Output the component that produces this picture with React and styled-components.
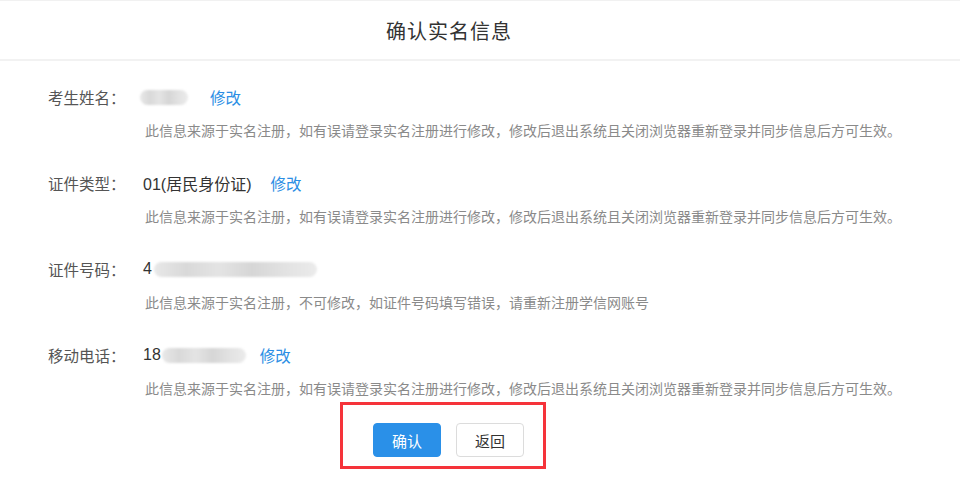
import React from "react";
import styled, { createGlobalStyle } from "styled-components";

const GlobalStyle = createGlobalStyle`
    body {
        margin: 0;
        background: #ffffff;
        font-family: "Liberation Sans", "Noto Sans CJK SC", sans-serif;
    }
`

const NOTE_EDIT = "此信息来源于实名注册，如有误请登录实名注册进行修改，修改后退出系统且关闭浏览器重新登录并同步信息后方可生效。"
const NOTE_LOCKED = "此信息来源于实名注册，不可修改，如证件号码填写错误，请重新注册学信网账号"

const rows = [
    { label: "考生姓名：", prefix: "", blur: { w: 48, shift: -3 }, editable: true, gap: 22, note: NOTE_EDIT },
    { label: "证件类型：", prefix: "01(居民身份证)", blur: null, editable: true, gap: 19, note: NOTE_EDIT },
    { label: "证件号码：", prefix: "4", blur: { w: 163, shift: 2 }, editable: false, gap: 0, note: NOTE_LOCKED },
    { label: "移动电话：", prefix: "18", blur: { w: 84, shift: 1 }, editable: true, gap: 14, note: NOTE_EDIT },
]

export default function App() {
    return (
        <Page>
            <GlobalStyle />
            <Header>
                <Title>确认实名信息</Title>
            </Header>
            <Content>
                <List>
                    {rows.map((row) => (
                        <Row key={row.label}>
                            <Line>
                                <Label>{row.label}</Label>
                                <Value>{row.prefix}</Value>
                                {row.blur && <Blur $w={row.blur.w} $shift={row.blur.shift} />}
                                {row.editable && <EditLink $gap={row.gap}>修改</EditLink>}
                            </Line>
                            <Note>{row.note}</Note>
                        </Row>
                    ))}
                </List>
                <Actions>
                    <Highlight>
                        <PrimaryButton>确认</PrimaryButton>
                        <GhostButton>返回</GhostButton>
                    </Highlight>
                </Actions>
            </Content>
        </Page>
    )
}

const Page = styled.div`
    width: 960px;
    min-height: 493px;
    background: #ffffff;
`

const Header = styled.div`
    height: 58px;
    border-top: 1px solid #f1f1f1;
    border-bottom: 2px solid #f2f2f2;
    display: flex;
    align-items: center;
    justify-content: center;
`

const Title = styled.h1`
    margin: 0 0 0 -62px;
    font-family: "Noto Sans CJK SC", sans-serif;
    font-size: 20px;
    letter-spacing: 1px;
    font-weight: 400;
    color: #333333;
`

const Content = styled.div`
    padding: 24px 0 0 48px;
`

const List = styled.div`
    display: flex;
    flex-direction: column;
    gap: 29px;
`

const Row = styled.div`
    display: flex;
    flex-direction: column;
`

const Line = styled.div`
    display: flex;
    align-items: center;
    height: 24px;
`

const Label = styled.span`
    width: 95px;
    flex-shrink: 0;
    font-family: "Noto Sans CJK SC", sans-serif;
    font-size: 15.5px;
    color: #555555;
`

const Value = styled.span`
    font-family: "Liberation Sans", "Noto Sans CJK SC", sans-serif;
    font-size: 16px;
    color: #333333;
`

const Blur = styled.span`
    display: inline-block;
    width: ${p => p.$w}px;
    height: 15px;
    margin-left: ${p => p.$shift}px;
    border-radius: 8px;
    background: linear-gradient(90deg, #e8e8e8 0%, #d9d9d9 20%, #e4e4e4 40%, #d6d6d6 60%, #e2e2e2 80%, #ebebeb 100%);
    filter: blur(1.2px);
`

const EditLink = styled.a`
    margin-left: ${p => p.$gap}px;
    font-family: "Noto Sans CJK SC", sans-serif;
    font-size: 15.5px;
    color: #2b8ee4;
    cursor: pointer;
`

const Note = styled.p`
    margin: 9px 0 0 97px;
    height: 24px;
    line-height: 24px;
    font-family: "Noto Sans CJK SC", sans-serif;
    font-size: 14px;
    color: #8a8a8a;
    white-space: nowrap;
`

const Actions = styled.div`
    display: flex;
    padding: 2px 0 0 292px;
`

const Highlight = styled.div`
    display: flex;
    gap: 15px;
    padding: 18px 19px 9px 30px;
    border: 3px solid #f5333a;
`

const BaseButton = styled.button`
    width: 68px;
    height: 34px;
    border-radius: 4px;
    font-family: "Noto Sans CJK SC", sans-serif;
    font-size: 15px;
    cursor: pointer;
`

const PrimaryButton = styled(BaseButton)`
    background: #2a90e8;
    border: 1px solid #2a90e8;
    color: #ffffff;
`

const GhostButton = styled(BaseButton)`
    background: #ffffff;
    border: 1px solid #dcdcdc;
    color: #333333;
`
